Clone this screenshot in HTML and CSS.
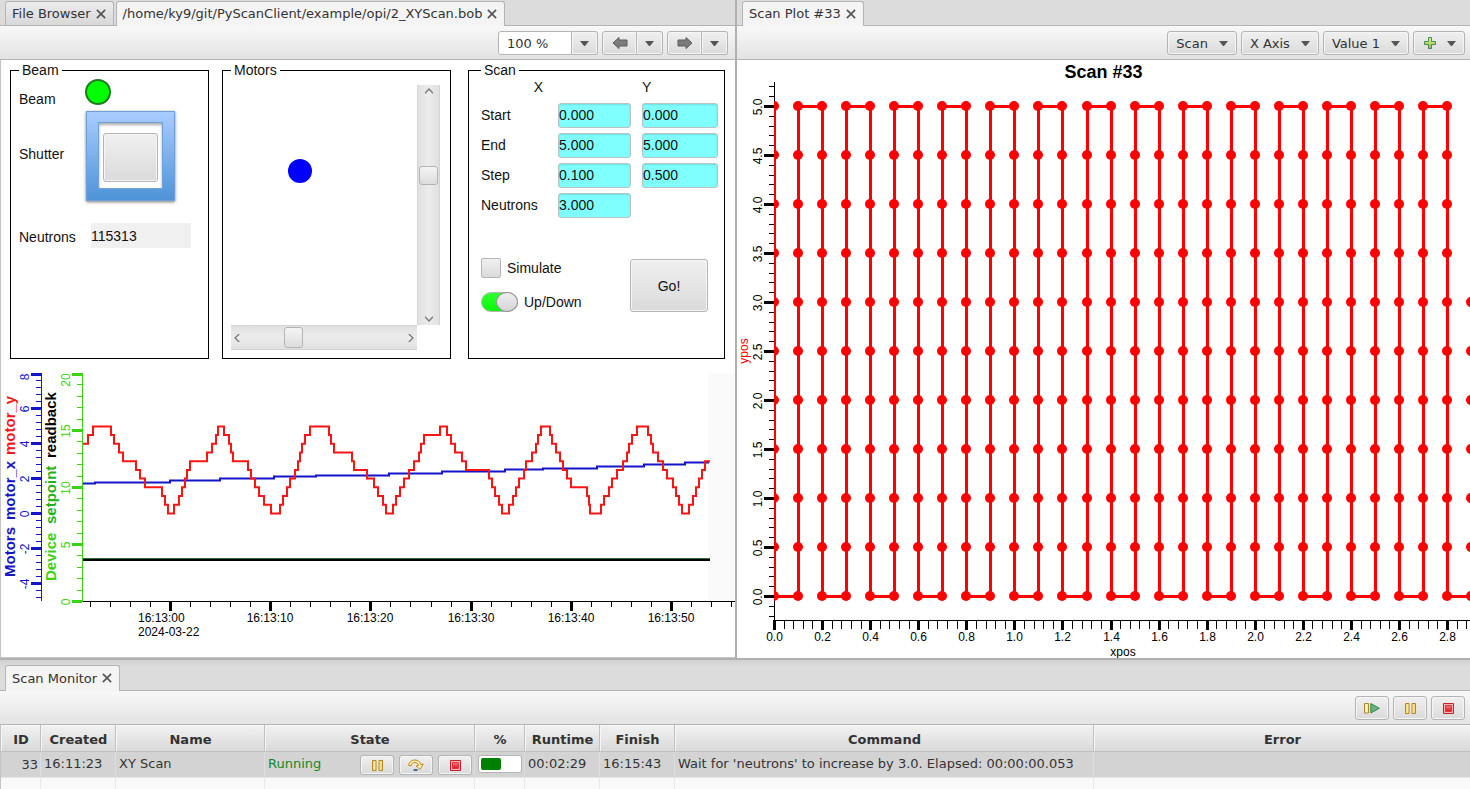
FILE: index.html
```html
<!DOCTYPE html>
<html lang="en">
<head>
<meta charset="utf-8">
<title>XY Scan</title>
<link rel="stylesheet" href="styles.css">
</head>
<body>
<svg class="defs" aria-hidden="true">
  <defs>
    <linearGradient id="gold"><stop offset="0" stop-color="#f7d96b"/><stop offset=".5" stop-color="#fffbe0"/><stop offset="1" stop-color="#f5cf55"/></linearGradient>
    <linearGradient id="red" x2="0" y2="1"><stop offset="0" stop-color="#f47a7f"/><stop offset="1" stop-color="#e60f1c"/></linearGradient>
    <linearGradient id="green" x2="0" y2="1"><stop offset="0" stop-color="#f3ee8a"/><stop offset="1" stop-color="#8fc04a"/></linearGradient>
    <symbol id="i-close" viewBox="0 0 9 9"><path d="M.8 .8L8.200 8.200M8.200 .8L.8 8.200" stroke="#555" stroke-width="1.500" fill="none"/></symbol>
    <symbol id="i-caret" viewBox="0 0 9 5"><path d="M0 0H9L5 5H4Z" fill="#555"/></symbol>
    <symbol id="i-back" viewBox="0 0 16 14"><path d="M1 7L7 1.500V4H15V10H7V12.500Z" fill="#7c7c7c" stroke="#5c5c5c" stroke-linejoin="round"/></symbol>
    <symbol id="i-next" viewBox="0 0 16 14"><path d="M15 7L9 1.500V4H1V10H9V12.500Z" fill="#7c7c7c" stroke="#5c5c5c" stroke-linejoin="round"/></symbol>
    <symbol id="i-plus" viewBox="0 0 12 12"><path d="M4.500 .5H7.500V4.500H11.500V7.500H7.500V11.500H4.500V7.500H.5V4.500H4.500Z" fill="url(#green)" stroke="#3f8d5c"/></symbol>
    <symbol id="i-pause" viewBox="0 0 16 16"><path d="M3.500 3.500H7V13.500H3.500ZM10 3.500H13.500V13.500H10Z" fill="url(#gold)" stroke="#b3861f"/></symbol>
    <symbol id="i-resume" viewBox="0 0 16 16"><path d="M.5 3.500H4.500V13H.5Z" fill="url(#gold)" stroke="#b3861f"/><path d="M6.800 3.500L15.300 8.300L6.800 13Z" fill="#69b37a" stroke="#2e8a4c"/></symbol>
    <symbol id="i-stop" viewBox="0 0 16 16"><path d="M3.500 3.500H13.500V13.500H3.500Z" fill="#f8b4b4" stroke="#c5202b"/><path d="M5.500 5.500H11.500V11.500H5.500Z" fill="url(#red)" stroke="#e6333d"/></symbol>
    <symbol id="i-step" viewBox="0 0 16 16"><path d="M.7 8.500C1 4.500 4 3 7 3C10 3 12 4.500 12.600 7.500L15.300 7L12 12.500L8 9L10.500 8.500C10 6.500 9 5.500 7 5.500C5 5.500 3.500 6.500 3 9Z" fill="#fdf0a8" stroke="#c08a28" stroke-linejoin="round"/><path d="M5.500 13H9.500" stroke="#4a6c8c" stroke-width="2"/></symbol>
    <symbol id="i-chev" viewBox="0 0 8 6"><path d="M0 5.200L4 1L8 5.200" fill="none" stroke="#777" stroke-width="1.300"/></symbol>
  </defs>
</svg>

<main class="top">
  <section class="pane pane-left">
    <div class="tabs" role="tablist">
      <div class="tab"><span role="tab">File Browser</span><button class="close" aria-label="Close File Browser"><svg><use href="#i-close"/></svg></button></div>
      <div class="tab active"><span role="tab" aria-selected="true">/home/ky9/git/PyScanClient/example/opi/2_XYScan.bob</span><button class="close" aria-label="Close display"><svg><use href="#i-close"/></svg></button></div>
    </div>
    <div class="toolbar">
      <div class="split zoom"><input type="text" value="100 %" aria-label="Zoom"><button class="drop" aria-label="Zoom levels"><svg class="caret"><use href="#i-caret"/></svg></button></div>
      <div class="split"><button class="nav" aria-label="Back"><svg><use href="#i-back"/></svg></button><button class="drop" aria-label="Back history"><svg class="caret"><use href="#i-caret"/></svg></button></div>
      <div class="split"><button class="nav" aria-label="Forward"><svg><use href="#i-next"/></svg></button><button class="drop" aria-label="Forward history"><svg class="caret"><use href="#i-caret"/></svg></button></div>
    </div>
    <div class="display">
      <div class="groups">
        <fieldset class="group beam">
          <legend>Beam</legend>
          <span class="beam-label">Beam</span><span class="led"></span>
          <span class="shutter-label">Shutter</span><div class="frame"><div class="frame-inner"><button class="push" aria-label="Shutter"></button></div></div>
          <span class="neutron-label">Neutrons</span><output class="readout">115313</output>
        </fieldset>
        <fieldset class="group motors">
          <legend>Motors</legend>
          <div class="stage"><span class="dot"></span></div>
          <div class="scroll vertical"><button aria-label="Up"><svg class="chev"><use href="#i-chev"/></svg></button><input type="range" value="35" aria-label="Motor Y"><button aria-label="Down"><svg class="chev down"><use href="#i-chev"/></svg></button></div>
          <div class="scroll horizontal"><button aria-label="Left"><svg class="chev left"><use href="#i-chev"/></svg></button><input type="range" value="29" aria-label="Motor X"><button aria-label="Right"><svg class="chev right"><use href="#i-chev"/></svg></button></div>
        </fieldset>
        <fieldset class="group scan">
          <legend>Scan</legend>
          <div class="fields">
            <span class="head x-head">X</span><span></span><span class="head">Y</span>
            <label for="start-x">Start</label><input id="start-x" type="text" value="0.000"><input type="text" value="0.000" aria-label="Start Y">
            <label for="end-x">End</label><input id="end-x" type="text" value="5.000"><input type="text" value="5.000" aria-label="End Y">
            <label for="step-x">Step</label><input id="step-x" type="text" value="0.100"><input type="text" value="0.500" aria-label="Step Y">
            <label for="neutrons">Neutrons</label><input id="neutrons" type="text" value="3.000">
          </div>
          <div class="actions">
            <div class="options">
              <label><input type="checkbox" class="check">Simulate</label>
              <label><input type="checkbox" class="switch" checked>Up/Down</label>
            </div>
            <button class="go">Go!</button>
          </div>
        </fieldset>
      </div>
      <svg id="trend" class="trend" role="img" aria-label="Motor and device history"></svg>
    </div>
  </section>
  <div class="divider"></div>
  <section class="pane pane-right">
    <div class="tabs" role="tablist">
      <div class="tab active"><span role="tab" aria-selected="true">Scan Plot #33</span><button class="close" aria-label="Close Scan Plot"><svg><use href="#i-close"/></svg></button></div>
    </div>
    <div class="toolbar">
      <button class="menu">Scan<svg class="caret"><use href="#i-caret"/></svg></button>
      <button class="menu">X Axis<svg class="caret"><use href="#i-caret"/></svg></button>
      <button class="menu">Value 1<svg class="caret"><use href="#i-caret"/></svg></button>
      <button class="menu" aria-label="Add"><svg class="plus"><use href="#i-plus"/></svg><svg class="caret"><use href="#i-caret"/></svg></button>
    </div>
    <svg id="scanplot" class="scanplot" role="img" aria-label="Scan #33"></svg>
  </section>
</main>

<section class="monitor">
  <div class="tabs" role="tablist">
    <div class="tab active"><span role="tab" aria-selected="true">Scan Monitor</span><button class="close" aria-label="Close Scan Monitor"><svg><use href="#i-close"/></svg></button></div>
  </div>
  <div class="toolbar">
    <button class="tool" aria-label="Resume all"><svg><use href="#i-resume"/></svg></button>
    <button class="tool" aria-label="Pause all"><svg><use href="#i-pause"/></svg></button>
    <button class="tool" aria-label="Abort all"><svg><use href="#i-stop"/></svg></button>
  </div>
  <table>
    <colgroup><col class="c-id"><col class="c-time"><col class="c-name"><col class="c-state"><col class="c-pct"><col class="c-time"><col class="c-time"><col class="c-cmd"><col></colgroup>
    <thead><tr><th>ID</th><th>Created</th><th>Name</th><th>State</th><th>%</th><th>Runtime</th><th>Finish</th><th>Command</th><th>Error</th></tr></thead>
    <tbody>
      <tr class="selected"><td class="num">33</td><td>16:11:23</td><td>XY Scan</td>
        <td><div class="state"><span>Running</span><button class="tool" aria-label="Pause"><svg><use href="#i-pause"/></svg></button><button class="tool" aria-label="Next"><svg><use href="#i-step"/></svg></button><button class="tool" aria-label="Abort"><svg><use href="#i-stop"/></svg></button></div></td>
        <td><progress max="100" value="52">52%</progress></td><td>00:02:29</td><td>16:15:43</td><td>Wait for 'neutrons' to increase by 3.0. Elapsed: 00:00:00.053</td><td></td></tr>
      <tr><td></td><td></td><td></td><td></td><td></td><td></td><td></td><td></td><td></td></tr>
    </tbody>
  </table>
</section>
<script src="plots.js"></script>
</body>
</html>
```

FILE: styles.css
```css
* { box-sizing: border-box; }
body {
  margin: 0;
  height: 100vh;
  display: flex;
  flex-direction: column;
  overflow: hidden;
  background: #fff;
  color: #333;
  font: 13px "DejaVu Sans", sans-serif;
}
button, input { font: inherit; color: inherit; margin: 0; padding: 0; }
svg { display: block; }
.defs { position: absolute; width: 0; height: 0; }

.top { display: flex; flex: none; border-bottom: 2px solid #b0b0b0; }
.pane { display: flex; flex-direction: column; min-width: 0; }
.pane-left { width: 50%; }
.pane-right { flex: 1; }
.divider { width: 2px; background: #b0b0b0; }

/* Tabs and toolbars */
.tabs {
  display: flex;
  gap: 2px;
  height: 26px;
  padding: 1px 5px 0;
  background: #dcdcdc;
  border-bottom: 1px solid #b4b4b4;
}
.tab {
  display: flex;
  align-items: center;
  gap: 5px;
  padding: 0 7px 0 6px;
  border: 1px solid #b4b4b4;
  border-bottom: 0;
  border-radius: 3px 3px 0 0;
  background: linear-gradient(#ececec, #d8d8d8);
  white-space: nowrap;
}
.tab.active { background: #f4f4f4; margin-bottom: -1px; }
.tab.active .close, .tab.active span { margin-bottom: 1px; }
.close { border: 0; background: none; }
.close svg { width: 10px; height: 10px; }
.toolbar {
  display: flex;
  justify-content: flex-end;
  align-items: center;
  gap: 4px;
  height: 34px;
  padding: 1px 5px 0;
  background: linear-gradient(#f8f8f8, #e3e3e3);
  border-bottom: 1px solid #b4b4b4;
}
.pane-left .toolbar { padding-right: 7px; }
.split { display: flex; height: 24px; }
.split button, .menu, .tool, .push, .go {
  border: 1px solid #b4b4b4;
  border-radius: 3px;
  background: linear-gradient(#f0f0f0, #dadada);
  box-shadow: inset 0 0 0 1px #f5f5f5;
}
.split button { display: flex; align-items: center; justify-content: center; }
.split .drop { width: 26px; border-left: 0; border-radius: 0 3px 3px 0; }
.split .nav { width: 35px; border-radius: 3px 0 0 3px; }
.nav svg { width: 16px; height: 14px; }
.zoom input {
  width: 74px;
  padding-left: 8px;
  border: 1px solid #b4b4b4;
  border-radius: 3px 0 0 3px;
  background: #fff;
}
.caret { width: 9px; height: 5px; }
.menu { display: flex; align-items: center; gap: 11px; height: 24px; padding: 0 8px; }
.plus { width: 12px; height: 12px; margin-left: 2px; }
.tool { width: 34px; height: 24px; display: flex; align-items: center; justify-content: center; }
.tool svg { width: 16px; height: 16px; }

/* Operator display */
.display {
  flex: 1;
  padding-top: 2px;
  border-left: 1px solid #c4c4c4;
  border-bottom: 1px solid #c4c4c4;
  color: #111;
  font: 14px/16px "Liberation Sans", sans-serif;
}
.groups {
  display: grid;
  grid-template-columns: 199fr 229fr 257fr;
  gap: 15px;
  padding: 0 10px 0 9px;
}
.group { min-width: 0; height: 297px; margin: 0; border: 1px solid #000; }
legend { padding: 0 3px; }
.beam {
  display: grid;
  grid-template-columns: 66px 1fr;
  grid-template-rows: 28px 90px 25px;
  align-items: center;
  align-content: start;
  justify-items: start;
  row-gap: 4px;
  padding: 1px 8px 0;
}
.beam-label { align-self: end; }
.shutter-label { padding-bottom: 4px; }
.led {
  align-self: start;
  width: 26px;
  height: 26px;
  border: 2px solid #1f7a1f;
  border-radius: 50%;
  background: #0f0;
}
.frame {
  width: 89px;
  height: 90px;
  margin-left: 1px;
  padding: 10px 11px 11px;
  border: 1px solid #6fa0d8;
  background: linear-gradient(#a9ccff, #4f93d8);
  box-shadow: 0 1px 3px #0008;
}
.frame-inner {
  height: 67px;
  padding: 10px 4px 6px;
  border: 1px solid #6fa0d8;
  background: #fff;
  box-shadow: inset 0 2px 3px #0005;
}
.push { display: block; width: 100%; height: 100%; }
.neutron-label, .readout { margin-top: 36px; }
.neutron-label { padding-top: 2px; }
.readout { width: 100px; height: 25px; margin-left: 6px; background: #f0f0f0; line-height: 26px; }
.motors {
  display: grid;
  grid-template-columns: 1fr 23px;
  grid-template-rows: 240px 25px;
  margin: 0 2px 0 -2px;
  padding: 7px 10px 8px 8px;
}
.stage { position: relative; }
.dot { position: absolute; left: 57px; top: 74px; width: 24px; height: 24px; border-radius: 50%; background: #00f; }
.scroll { display: flex; background: linear-gradient(#e0e0e0, #ececec, #e0e0e0); border: solid #d4d4d4; border-width: 1px 0; }
.scroll.vertical { flex-direction: column; background: linear-gradient(90deg, #e0e0e0, #ececec, #e0e0e0); border-width: 0 1px; }
.scroll button { display: flex; align-items: center; justify-content: center; flex: 0 0 12px; border: 0; background: none; }
.scroll input { appearance: none; flex: 1; min-width: 0; min-height: 0; background: none; }
.vertical input { writing-mode: vertical-lr; width: 21px; }
.scroll input::-webkit-slider-thumb {
  appearance: none;
  width: 19px;
  height: 21px;
  border: 1px solid #b4b4b4;
  border-radius: 3px;
  background: linear-gradient(#f4f4f4, #dcdcdc);
}
.vertical input::-webkit-slider-thumb { width: 19px; height: 19px; }
.chev { width: 8px; height: 6px; }
.chev.down { transform: rotate(180deg); }
.chev.left { transform: rotate(-90deg); }
.chev.right { transform: rotate(90deg); }

.scan { padding: 1px 6px 0 12px; }
.fields {
  display: grid;
  grid-template-columns: 66px 73px 76px;
  grid-template-rows: 19px;
  grid-auto-rows: 25px;
  column-gap: 11px;
  row-gap: 5px;
  align-items: center;
}
.fields label { padding-bottom: 2px; }
.head { padding-bottom: 4px; }
.x-head { text-align: right; padding-right: 4px; }
.fields input {
  width: 100%;
  height: 25px;
  padding-bottom: 2px;
  border: 1px solid #b8c4c4;
  border-radius: 3px;
  background: #80ffff;
  box-shadow: inset 0 1px 2px #0002;
}
.actions { display: flex; align-items: flex-end; justify-content: space-between; padding: 40px 10px 0 0; }
.options { display: flex; flex-direction: column; gap: 14px; }
.options label { display: flex; align-items: center; gap: 6px; }
.options input { appearance: none; height: 20px; border: 1px solid #b4b4b4; }
.check { width: 20px; border-radius: 2px; background: linear-gradient(#f0f0f0, #dadada); }
.switch { display: flex; justify-content: flex-end; width: 37px; border-radius: 10px; background: linear-gradient(#3f3, #0f0); }
.switch::after {
  content: "";
  width: 20px;
  margin: -1px;
  border: 1px solid #999;
  border-radius: 50%;
  background: linear-gradient(#eee, #d4d4d4);
}
.go { width: 78px; height: 53px; }

/* Plots */
.trend { width: 100%; height: 296px; margin-top: 1px; }
.scanplot { width: 100%; height: 598px; }
.trend, .scanplot { font: 12px "Liberation Sans", sans-serif; fill: #000; overflow: hidden; }
.line { fill: none; stroke-width: 2; }
.name { font-size: 15px; font-weight: bold; }
.title { font-size: 18px; font-weight: bold; }

/* Scan monitor */
.monitor { flex: 1; min-height: 0; overflow: hidden; }
.monitor .tabs { height: 31px; padding-top: 5px; background: linear-gradient(#d0d0d0, #dcdcdc 6px); }
table { width: 100%; table-layout: fixed; border-collapse: separate; border-spacing: 0; border-left: 1px solid #c4c4c4; }
.c-id { width: 40px; }
.c-time { width: 75px; }
.c-name { width: 149px; }
.c-state { width: 210px; }
.c-pct { width: 50px; }
.c-cmd { width: 419px; }
th {
  height: 27px;
  padding: 2px 0 0 1px;
  border-right: 1px solid #c0c0c0;
  border-bottom: 1px solid #c0c0c0;
  background: linear-gradient(#f2f2f2, #d9d9d9);
  box-shadow: inset 1px 1px #f6f6f6;
}
td { height: 26px; padding: 0 2px 0 3px; border-right: 1px solid #e8e8e8; background: #f9f9f9; white-space: nowrap; }
.selected td { background: #d3d3d3; border-right-color: #dedede; border-bottom: 1px solid #e4e4e4; padding-bottom: 2px; }
th:last-child, td:last-child, .selected td:last-child { border-right: 0; }
.selected .num { text-align: right; padding-bottom: 0; }
.state { display: flex; align-items: center; gap: 5px; }
.state span { flex: 1; color: #118822; }
.state .tool { height: 20px; margin-top: 2px; }
progress {
  appearance: none;
  display: block;
  width: 44px;
  height: 18px;
  padding: 2px;
  border: 1px solid #b4b4b4;
  border-radius: 3px;
  background: #fff;
}
progress::-webkit-progress-bar { background: none; }
progress::-webkit-progress-value { background: #008000; border-radius: 2px; }
```

FILE: plots.js
```js
const NS = "http://www.w3.org/2000/svg";

function add(parent, tag, attrs, text) {
  const node = document.createElementNS(NS, tag);
  for (const key in attrs) node.setAttribute(key, attrs[key]);
  if (text !== undefined) node.textContent = text;
  parent.appendChild(node);
  return node;
}

function rect(svg, x, y, width, height, fill) {
  add(svg, "rect", { x, y, width, height, fill });
}

function vtext(svg, x, y, text, fill, anchor, cls) {
  add(svg, "text", { transform: `translate(${x} ${y}) rotate(-90)`, "text-anchor": anchor, fill, class: cls || "" }, text);
}

function staircase(points, end, toY) {
  let d = `M${points[0][0]} ${toY(points[0][1])}`;
  points.slice(1).forEach(([x, v]) => { d += `H${x}V${toY(v)}`; });
  return d + `H${end}`;
}

function drawTrend() {
  const svg = document.getElementById("trend");
  const blue = "#1414c8", green = "#3cd214", red = "#fa1414", darkGreen = "#1eb41e";

  rect(svg, 707, 13, 2000, 228, "#fafafa");

  rect(svg, 40, 13, 1, 228, blue);
  for (let i = 0; i <= 32; i++) {
    const y = Math.round(13 + i * 7);
    if (i % 5 === 0) {
      rect(svg, 30, Math.max(y - 1, 13), 10, 3, blue);
      vtext(svg, 28, i === 0 ? 17 : y + 1, String(8 - i / 5 * 2), blue, "middle");
    } else rect(svg, 35, y, 5, 1, blue);
  }

  rect(svg, 81, 13, 1, 229, green);
  for (let i = 0; i <= 20; i++) {
    const y = Math.round(13 + i * 11.4);
    if (i % 5 === 0) {
      rect(svg, 71, Math.max(y - 1, 13), 10, 3, green);
      vtext(svg, 69, i === 0 ? 20 : y + 1, String(20 - i), green, "middle");
    } else rect(svg, 76, y, 5, 1, green);
  }

  vtext(svg, 14, 217, "Motors", blue, "start", "name");
  vtext(svg, 14, 160, "motor_x", blue, "start", "name");
  vtext(svg, 14, 95, "motor_y", red, "start", "name");
  vtext(svg, 55, 221, "Device", green, "start", "name");
  vtext(svg, 55, 164, "setpoint", darkGreen, "start", "name");
  vtext(svg, 55, 98, "readback", "#000", "start", "name");

  const motorX = [[82, 123.5], [94, 122.5], [169, 120.5], [219, 118.5], [273, 116.5], [315, 115.5],
    [388, 113.5], [441, 111.5], [504, 109.5], [542, 108.5], [596, 106.5], [643, 104.5], [684, 102.5]];
  add(svg, "path", { d: staircase(motorX, 708, y => y), class: "line", stroke: blue });

  const motorY = [[82, 2], [87, 1], [92, 0], [110, 1], [113, 2], [118, 3], [122, 4], [135, 5], [139, 6], [144, 7],
    [161, 8], [164, 9], [167, 10], [173, 9], [178, 8], [181, 7], [184, 6], [186, 5], [189, 4], [206, 3], [211, 2],
    [215, 1], [217, 0], [223, 1], [228, 2], [230, 3], [232, 4], [247, 5], [250, 6], [254, 7], [258, 8], [263, 9],
    [270, 10], [279, 9], [282, 8], [286, 7], [289, 6], [294, 5], [297, 4], [299, 3], [301, 2], [304, 1], [309, 0],
    [328, 1], [330, 2], [333, 3], [351, 4], [353, 5], [366, 6], [373, 7], [377, 8], [382, 9], [385, 10], [392, 9],
    [395, 8], [399, 7], [403, 6], [408, 5], [413, 4], [418, 3], [420, 2], [423, 1], [439, 0], [446, 1], [450, 2],
    [454, 3], [461, 4], [465, 5], [488, 6], [491, 7], [494, 8], [498, 9], [501, 10], [508, 9], [512, 8], [515, 7],
    [518, 6], [523, 5], [525, 4], [531, 3], [535, 2], [537, 1], [540, 0], [549, 1], [551, 2], [555, 3], [559, 4],
    [562, 5], [566, 6], [570, 7], [586, 8], [588, 9], [589, 10], [600, 9], [603, 8], [608, 7], [611, 6], [616, 5],
    [622, 4], [626, 3], [628, 2], [631, 1], [636, 0], [647, 1], [650, 2], [652, 3], [657, 4], [662, 5], [666, 6],
    [672, 7], [675, 8], [678, 9], [681, 10], [688, 9], [692, 8], [695, 7], [698, 6], [701, 5], [704, 4]];
  add(svg, "path", { d: staircase(motorY, 709, k => 66.4 + 8.7 * k), class: "line", stroke: red });

  rect(svg, 82, 198, 627, 1, "#2a6a2a");
  rect(svg, 82, 199, 627, 2, "#000");

  rect(svg, 82, 241, 2000, 1, "#000");
  for (let i = -4; i <= 28; i++) {
    const x = Math.round(169 + i * 20.04);
    if (i % 5 === 0) {
      rect(svg, x - 1, 241, 3, 10, "#000");
      if (i > 0) add(svg, "text", { x, y: 262, "text-anchor": "middle" }, `16:13:${i / 5 * 10}`);
    } else rect(svg, x, 242, 1, 5, "#000");
  }
  add(svg, "text", { x: 137, y: 262 }, "16:13:00");
  add(svg, "text", { x: 137, y: 276 }, "2024-03-22");
}

function drawScan() {
  const svg = document.getElementById("scanplot");
  const left = 37, bottom = 560, red = "#f00";
  const px = i => left + 0.5 + Math.round(i * 24.04);
  const py = v => 536.5 - v * 98;

  add(svg, "text", { x: "50%", y: 18, "text-anchor": "middle", class: "title" }, "Scan #33");
  vtext(svg, 11, 291, "ypos", red, "middle");

  rect(svg, left, 22, 1, bottom - 22, "#000");
  for (let i = -2; i <= 52; i++) {
    const y = Math.round(536 - i * 9.8);
    if (i % 5 === 0 && i >= 0) {
      rect(svg, left - 10, y - 1, 10, 3, "#000");
      vtext(svg, 25, y + 1, (i / 10).toFixed(1), "#000", "middle");
    } else rect(svg, left - 5, y, 5, 1, "#000");
  }

  rect(svg, left, bottom, 2000, 1, "#000");
  for (let i = 0; i <= 74; i++) {
    const x = Math.round(left + i * 9.615);
    if (i % 5 === 0) {
      rect(svg, x - 1, bottom, 3, 10, "#000");
      if (i <= 70) add(svg, "text", { x: x + 0.5, y: 581, "text-anchor": "middle" }, (i / 25).toFixed(1));
    } else rect(svg, x, bottom, 1, 9, "#000");
  }
  add(svg, "text", { x: 386, y: 596, "text-anchor": "middle" }, "xpos");

  const clip = add(svg, "clipPath", { id: "plot-area" });
  add(clip, "rect", { x: left, y: 22, width: 2000, height: bottom - 22 });
  const plot = add(svg, "g", { "clip-path": "url(#plot-area)", fill: red });
  let d = `M${px(0)} ${py(5)}`;
  for (let i = 0; i < 29; i++) d += `V${py(i % 2 ? 5 : 0)}H${px(i + 1)}`;
  d += `V${py(3)}`;
  add(plot, "path", { d, fill: "none", stroke: red, "stroke-width": 3 });
  for (let i = 0; i <= 29; i++) {
    for (let j = 0; j <= (i === 29 ? 6 : 10); j++) {
      add(plot, "circle", { cx: px(i) - 0.5, cy: py(j / 2) - 0.5, r: 5 });
    }
  }
}

drawTrend();
drawScan();
```
